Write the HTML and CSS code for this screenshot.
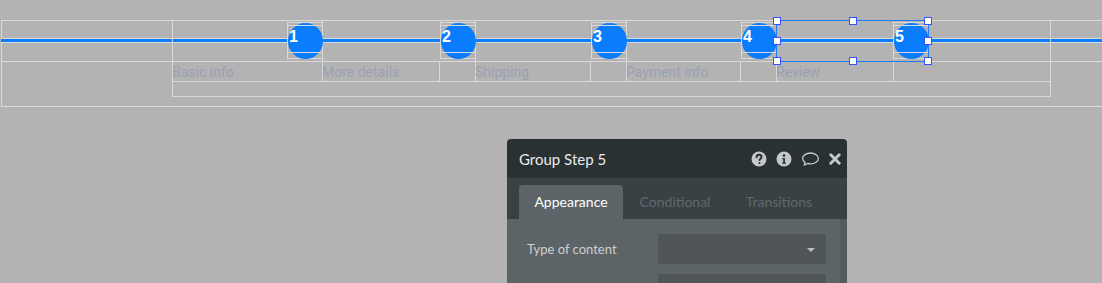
FILE: index.html
```html
<!DOCTYPE html>
<html>
<head>
    <title>Group Step 5</title>
    <link rel="stylesheet" href="styles.css">
</head>
<body>
    <div class="canvas">
        <div class="page-group"></div>
        <div class="row-band"></div>
        <div class="line-el"><div class="line-fill"></div></div>

        <div class="stepper">
            <div class="steps">
                <div class="step step-first">
                    <div class="step-top"><div class="dot-box"><div class="dot"></div><div class="dot-text">1</div></div></div>
                    <div class="step-bottom"><div class="step-label">Basic info</div><div class="step-gap"></div></div>
                </div>
                <div class="step">
                    <div class="step-top"><div class="dot-box"><div class="dot"></div><div class="dot-text">2</div></div></div>
                    <div class="step-bottom"><div class="step-label">More details</div><div class="step-gap"></div></div>
                </div>
                <div class="step">
                    <div class="step-top"><div class="dot-box"><div class="dot"></div><div class="dot-text">3</div></div></div>
                    <div class="step-bottom"><div class="step-label">Shipping</div><div class="step-gap"></div></div>
                </div>
                <div class="step">
                    <div class="step-top"><div class="dot-box"><div class="dot"></div><div class="dot-text">4</div></div></div>
                    <div class="step-bottom"><div class="step-label">Payment info</div><div class="step-gap"></div></div>
                </div>
                <div class="step step-last">
                    <div class="step-top"><div class="dot-box"><div class="dot"></div><div class="dot-text">5</div></div></div>
                    <div class="step-bottom"><div class="step-label">Review</div><div class="step-gap"></div></div>
                </div>
            </div>
        </div>

        <!-- selected element -->
        <div class="selection">
            <span class="handle h-tl"></span>
            <span class="handle h-tc"></span>
            <span class="handle h-tr"></span>
            <span class="handle h-ml"></span>
            <span class="handle h-mr"></span>
            <span class="handle h-bl"></span>
            <span class="handle h-bc"></span>
            <span class="handle h-br"></span>
        </div>

        <div class="panel">
            <div class="panel-header">
                <div class="panel-title">Group Step 5</div>
                <div class="panel-icons">
                    <svg width="16" height="16" viewBox="0 0 16 16">
                        <circle cx="8" cy="8" r="7.5" fill="#c4c8c9"/>
                        <path d="M5.6 6.2c0-1.5 1.1-2.4 2.5-2.4s2.4.9 2.4 2.1c0 1.7-1.9 1.8-1.9 3.2" fill="none" stroke="#293133" stroke-width="2" stroke-linecap="round"/>
                        <circle cx="8.5" cy="12" r="1.1" fill="#293133"/>
                    </svg>
                    <svg width="16" height="16" viewBox="0 0 16 16">
                        <circle cx="8" cy="8" r="7.5" fill="#c4c8c9"/>
                        <circle cx="8" cy="4.5" r="1.3" fill="#293133"/>
                        <path d="M6.3 7h2.6v4.6h1v1.2H6.2v-1.2h1V8.2h-.9z" fill="#293133"/>
                    </svg>
                    <svg width="19" height="16" viewBox="0 0 19 16">
                        <path d="M9.5 2C5.1 2 1.6 4.5 1.6 7.5c0 1.6 1 3 2.5 4l-.9 2.7 3.4-1.7c.9.2 1.9.4 2.9.4 4.4 0 7.9-2.5 7.9-5.4S13.9 2 9.5 2z" fill="none" stroke="#c4c8c9" stroke-width="1.3" stroke-linejoin="round"/>
                    </svg>
                    <svg width="12" height="12" viewBox="0 0 12 12">
                        <path d="M1.8 1.8l8.4 8.4M10.2 1.8l-8.4 8.4" stroke="#c4c8c9" stroke-width="3" stroke-linecap="round"/>
                    </svg>
                </div>
            </div>
            <div class="panel-tabs">
                <div class="tab tab-active">Appearance</div>
                <div class="tab">Conditional</div>
                <div class="tab">Transitions</div>
            </div>
            <div class="panel-body">
                <div class="panel-content">
                    <div class="field">
                        <div class="field-label">Type of content</div>
                        <div class="select"><span class="caret"></span></div>
                    </div>
                    <div class="field">
                        <div class="field-label"></div>
                        <div class="select"></div>
                    </div>
                </div>
                <div class="scroll-strip"></div>
            </div>
        </div>
    </div>
</body>
</html>
```

FILE: styles.css
```css
* {
    box-sizing: border-box;
}

body {
    margin: 0;
    padding: 0;
    background-color: #b3b3b3;
    font-family: Roboto, "Liberation Sans", sans-serif;
    overflow: hidden;
}

.canvas {
    position: relative;
    width: 1102px;
    height: 283px;
    overflow: hidden;
}

/* element outlines on the editor canvas */
.page-group {
    position: absolute;
    left: 1px;
    right: -2px;
    top: 20px;
    height: 87px;
    border: 1px solid #d9d9d9;
}

.row-band {
    position: absolute;
    left: 1px;
    right: -2px;
    top: 20px;
    height: 42px;
    border-bottom: 1px solid #d9d9d9;
}

.line-el {
    position: absolute;
    left: 1px;
    right: 0;
    top: 38px;
    height: 5px;
    border-top: 1px solid #d9d9d9;
    border-bottom: 1px solid #d9d9d9;
}

.line-fill {
    height: 3px;
    background-color: #0a7cfe;
}

.stepper {
    position: absolute;
    left: 172px;
    top: 20px;
    width: 879px;
    height: 77px;
    border: 1px solid #d9d9d9;
}

.steps {
    display: grid;
    grid-template-columns: 150px 153px 151px 150px 152px;
    border-bottom: 1px solid #d9d9d9;
}

.step {
    border-right: 1px solid #d9d9d9;
}

.step-last {
    border-right: none;
}

.step-top {
    display: flex;
    justify-content: flex-end;
    height: 41px;
    border-bottom: 1px solid #d9d9d9;
}

.dot-box {
    position: relative;
    width: 35px;
    height: 37px;
    margin-top: 1px;
    border: 1px solid #d9d9d9;
    border-right: none;
}

.step-last .dot-box {
    width: 36px;
    border-right: 1px solid #d9d9d9;
}

.dot {
    position: absolute;
    left: 0;
    top: 0;
    width: 35px;
    height: 36px;
    border-radius: 50%;
    background-color: #0a7cfe;
}

.dot-text {
    position: absolute;
    left: -1px;
    right: 0;
    top: 2px;
    height: 28px;
    padding: 1px 0 0 2px;
    border-top: 1px solid #d9d9d9;
    border-bottom: 1px solid #d9d9d9;
    color: #fff;
    font-family: "Liberation Sans", Arial, sans-serif;
    font-weight: bold;
    font-size: 16px;
    line-height: 20px;
}

.step-bottom {
    display: flex;
    height: 19px;
}

.step-label {
    flex: 1;
    border-right: 1px solid #d9d9d9;
    color: #9aa1b2;
    font-size: 14px;
    line-height: 21px;
    margin-left: -1px;
}

.step-first .step-label {
    border-right: none;
}

.step-gap {
    width: 35px;
}

/* selection box + handles */
.selection {
    position: absolute;
    left: 776px;
    top: 20px;
    width: 153px;
    height: 42px;
    border: 1px solid #1f7cf4;
}

.handle {
    position: absolute;
    width: 8px;
    height: 8px;
    background-color: #fff;
    border: 1px solid #3452ff;
}

.h-tl { left: -4px; top: -4px; }
.h-tc { left: 72px; top: -4px; }
.h-tr { right: -4px; top: -4px; }
.h-ml { left: -4px; top: 16px; }
.h-mr { right: -4px; top: 16px; }
.h-bl { left: -4px; bottom: -4px; }
.h-bc { left: 72px; bottom: -4px; }
.h-br { right: -4px; bottom: -4px; }

/* property editor window */
.panel {
    position: absolute;
    left: 507px;
    top: 139px;
    width: 340px;
    height: 160px;
    border-radius: 4px 4px 0 0;
    overflow: hidden;
    font-family: Lato, "Open Sans", sans-serif;
}

.panel-header {
    display: flex;
    align-items: center;
    justify-content: space-between;
    height: 39px;
    padding: 0 6px 0 12px;
    background-color: #293133;
}

.panel-title {
    color: #e9ebeb;
    font-size: 15px;
}

.panel-icons {
    display: flex;
    align-items: center;
    gap: 9px;
}

.panel-tabs {
    display: flex;
    height: 41px;
    padding: 7px 0 0 12px;
    background-color: #3a4144;
}

.tab {
    width: 104px;
    height: 34px;
    line-height: 34px;
    text-align: center;
    color: #5f686b;
    font-size: 14px;
    border-radius: 4px 4px 0 0;
}

.tab-active {
    background-color: #5d6467;
    color: #fff;
}

.panel-body {
    display: flex;
    height: 80px;
    background-color: #5d6467;
}

.panel-content {
    flex: 1;
    padding: 15px 14px 0 20px;
}

.field {
    display: flex;
    align-items: center;
    margin-bottom: 10px;
}

.field-label {
    width: 131px;
    color: #ccd0d1;
    font-size: 13px;
}

.select {
    position: relative;
    width: 168px;
    height: 30px;
    background-color: #4f5558;
    border-radius: 2px;
}

.caret {
    position: absolute;
    right: 11px;
    top: 14px;
    border-left: 4px solid transparent;
    border-right: 4px solid transparent;
    border-top: 4px solid #b9bdbe;
}

.scroll-strip {
    width: 7px;
    background-color: #545a5d;
}
```
